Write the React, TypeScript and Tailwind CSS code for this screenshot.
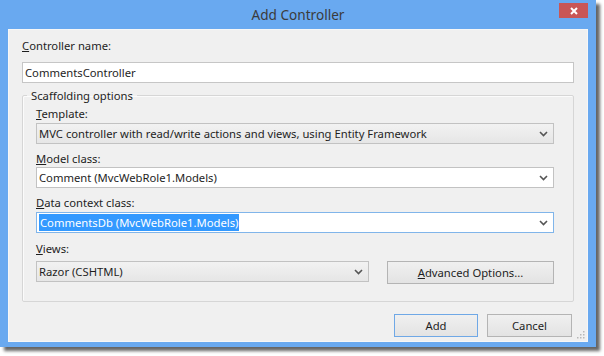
import React from 'react'

const FONT = { fontFamily: '"Noto Sans", "Open Sans", sans-serif' }

function Chevron() {
  return (
    <svg width="9" height="6" viewBox="0 0 9 6" className="shrink-0">
      <path d="M1 1 L4.5 4.5 L8 1" fill="none" stroke="#555" strokeWidth="1.6" />
    </svg>
  )
}

function Combo({
  children,
  gray,
  focused,
  className = '',
}: {
  children: React.ReactNode
  gray?: boolean
  focused?: boolean
  className?: string
}) {
  const bg = gray ? 'bg-gradient-to-b from-[#f2f2f2] to-[#e6e6e6]' : 'bg-white'
  const border = focused ? 'border-[#80b5ea]' : 'border-[#c2c2c2]'
  return (
    <div
      className={`h-[21px] border ${border} ${bg} flex items-center pl-[2px] pr-[5px] ${className}`}
    >
      <div className="flex-1 min-w-0 truncate leading-[17px]">{children}</div>
      <Chevron />
    </div>
  )
}

function Btn({ children, def, className = '' }: { children: React.ReactNode; def?: boolean; className?: string }) {
  return (
    <div
      className={`h-[23px] border ${def ? 'border-[#6fa8e6]' : 'border-[#b4b4b4]'} bg-gradient-to-b from-[#f0f0f0] to-[#e3e3e3] flex items-center justify-center leading-[15px] ${className}`}
    >
      {children}
    </div>
  )
}

function Label({ children, className = '' }: { children: React.ReactNode; className?: string }) {
  return <div className={`h-[15px] leading-[15px] ${className}`}>{children}</div>
}

export default function App() {
  return (
    <div className="w-[604px] h-[356px] bg-white text-[11.25px] text-[#1e1e1e]" style={FONT}>
      <div className="w-[596px] h-[347px] bg-[#69a9f0] shadow-[4px_4px_3px_rgba(0,0,0,0.6)] flex flex-col px-[8px] pb-[5px]">
        <div className="relative h-[29px] flex items-center justify-center">
          <span className="text-[13.6px] text-[#3b3b3b] leading-[18px]">Add Controller</span>
          <div className="absolute right-0 top-[3px] w-[29px] h-[15px] bg-[#c95656] flex items-center justify-center">
            <svg width="8" height="8" viewBox="0 0 8 8">
              <path d="M1 1 L7 7 M7 1 L1 7" stroke="white" strokeWidth="2" />
            </svg>
          </div>
        </div>

        <div className="relative flex-1 bg-[#f0f0f0] border border-[#f7f7f7] px-[13px] flex flex-col">
          <Label className="mt-[8px]">
            <u>C</u>ontroller name:
          </Label>
          <div className="mt-[9px] h-[21px] border border-[#c6c6c6] bg-white pl-[2px] leading-[19px]">
            CommentsController
          </div>

          <fieldset className="mt-[5px] border border-[#d6d6d6] rounded-[2px] shadow-[inset_1px_1px_0_#fbfbfb]">
            <legend className="ml-[4px] px-[4px] leading-[15px]">Scaffolding options</legend>
            <div className="pl-[13px] pr-[19px] pb-[17px] flex flex-col">
              <Label className="mt-[3px]">
                <u>T</u>emplate:
              </Label>
              <Combo gray className="mt-[2px]">
                MVC controller with read/write actions and views, using Entity Framework
              </Combo>

              <Label className="mt-[7px]">
                <u>M</u>odel class:
              </Label>
              <Combo className="mt-[1px]">Comment (MvcWebRole1.Models)</Combo>

              <Label className="mt-[7px]">
                <u>D</u>ata context class:
              </Label>
              <Combo focused className="mt-[2px]">
                <span className="bg-[#3399ff] text-white px-[1px] py-[1px]">CommentsDb (MvcWebRole1.Models)</span>
              </Combo>

              <Label className="mt-[8px]">
                <u>V</u>iews:
              </Label>
              <div className="mt-[5px] flex gap-[18px]">
                <Combo gray className="w-[333px]">
                  Razor (CSHTML)
                </Combo>
                <Btn className="flex-1">
                  <span>
                    <u>A</u>dvanced Options...
                  </span>
                </Btn>
              </div>
            </div>
          </fieldset>

          <div className="mt-[12px] flex justify-end gap-[9px] pr-[2px]">
            <Btn def className="w-[84px]">
              Add
            </Btn>
            <Btn className="w-[85px]">Cancel</Btn>
          </div>

          <svg className="absolute right-[2px] bottom-[2px]" width="9" height="9" viewBox="0 0 9 9">
            {[
              [7, 1],
              [7, 4],
              [4, 4],
              [7, 7],
              [4, 7],
              [1, 7],
            ].map(([x, y], i) => (
              <rect key={i} x={x} y={y} width="1.5" height="1.5" fill="#b8b8b8" />
            ))}
          </svg>
        </div>
      </div>
    </div>
  )
}
